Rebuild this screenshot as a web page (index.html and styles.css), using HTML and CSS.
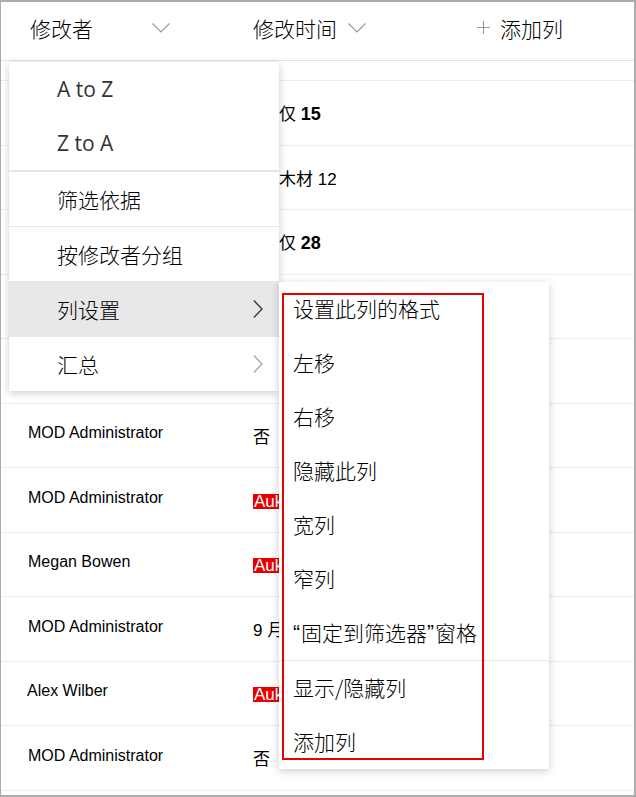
FILE: index.html
```html
<!DOCTYPE html>
<html lang="zh-CN">

<head>
  <meta charset="UTF-8">
  <meta name="viewport" content="width=device-width, initial-scale=1.0">
  <title>修改者 - 列设置</title>
  <link rel="stylesheet" href="styles.css">
</head>

<body>
  <div class="frame">
    <div class="list-header">
      <div class="col col-name">
        <span>修改者</span>
        <svg class="chev-down" width="18" height="10" viewBox="0 0 18 10"><path d="M0.5 0.5 L9 9 L17.5 0.5" /></svg>
      </div>
      <div class="col col-time">
        <span>修改时间</span>
        <svg class="chev-down" width="18" height="10" viewBox="0 0 18 10"><path d="M0.5 0.5 L9 9 L17.5 0.5" /></svg>
      </div>
      <div class="col col-add">
        <svg class="plus" width="13" height="13" viewBox="0 0 13 13"><path d="M6.5 0 V13 M0 6.5 H13" /></svg>
        <span>添加列</span>
      </div>
    </div>

    <div class="row row-short"></div>
    <div class="row">
      <div class="cell name"></div>
      <div class="cell value shifted">仅 <b>15</b></div>
    </div>
    <div class="row">
      <div class="cell name"></div>
      <div class="cell value shifted">木材 12</div>
    </div>
    <div class="row">
      <div class="cell name"></div>
      <div class="cell value shifted">仅 <b>28</b></div>
    </div>
    <div class="row">
      <div class="cell name"></div>
      <div class="cell value"></div>
    </div>
    <div class="row">
      <div class="cell name"></div>
      <div class="cell value"></div>
    </div>
    <div class="row">
      <div class="cell name">MOD Administrator</div>
      <div class="cell value">否</div>
    </div>
    <div class="row">
      <div class="cell name">MOD Administrator</div>
      <div class="cell value"><span class="tag">Auk</span></div>
    </div>
    <div class="row">
      <div class="cell name">Megan Bowen</div>
      <div class="cell value"><span class="tag">Auk</span></div>
    </div>
    <div class="row">
      <div class="cell name">MOD Administrator</div>
      <div class="cell value">9 月</div>
    </div>
    <div class="row">
      <div class="cell name tight">Alex Wilber</div>
      <div class="cell value"><span class="tag">Auk</span></div>
    </div>
    <div class="row">
      <div class="cell name">MOD Administrator</div>
      <div class="cell value">否</div>
    </div>
  </div>

  <!-- column header dropdown -->
  <div class="menu sort-menu">
    <div class="menu-item latin">A to Z</div>
    <div class="menu-item latin">Z to A</div>
    <div class="menu-item group-start">筛选依据</div>
    <div class="menu-item split">按修改者分组</div>
    <div class="menu-item active">
      <span>列设置</span>
      <svg class="chev-right" width="10" height="18" viewBox="0 0 10 18"><path d="M0.8 0.5 L9 9 L0.8 17.5" /></svg>
    </div>
    <div class="menu-item">
      <span>汇总</span>
      <svg class="chev-right faded" width="10" height="18" viewBox="0 0 10 18"><path d="M0.8 0.5 L9 9 L0.8 17.5" /></svg>
    </div>
  </div>

  <!-- column settings submenu -->
  <div class="menu sub-menu">
    <div class="sub-item">设置此列的格式</div>
    <div class="sub-item">左移</div>
    <div class="sub-item">右移</div>
    <div class="sub-item">隐藏此列</div>
    <div class="sub-item">宽列</div>
    <div class="sub-item">窄列</div>
    <div class="sub-item"><span class="quote">“</span>固定到筛选器<span class="quote">”</span>窗格</div>
    <div class="sub-item split-top">显示/隐藏列</div>
    <div class="sub-item">添加列</div>
  </div>

  <div class="highlight-box"></div>
</body>

</html>
```

FILE: styles.css
```css
body {
  margin: 0;
  padding: 0;
  background-color: #fff;
  color: #000;
  font-family: "Noto Sans CJK SC", "Liberation Sans", sans-serif;
}

.frame {
  box-sizing: border-box;
  width: 636px;
  height: 797px;
  border: 2px solid #ababab;
  border-left-width: 1px;
  overflow: hidden;
}

.list-header {
  display: flex;
  align-items: center;
  box-sizing: border-box;
  height: 59px;
  padding-bottom: 7px;
  border-bottom: 1px solid #e3e3e3;
  font-size: 21px;
  font-weight: 300;
}

.col {
  display: flex;
  align-items: center;
}

.col-name {
  width: 252px;
  padding-left: 29px;
  box-sizing: border-box;
}

.col-name .chev-down {
  margin-left: 59px;
}

.col-time {
  width: 217px;
}

.col-time .chev-down {
  margin-left: 11px;
}

.col-add {
  padding-left: 7px;
  gap: 10px;
}

.chev-down path,
.plus path {
  fill: none;
  stroke: #9a9a9a;
  stroke-width: 1.2;
}

.row {
  display: flex;
  align-items: center;
  height: 63.5px;
  border-bottom: 1px solid #ececec;
}

.row-short {
  height: 19px;
}

.cell {
  font-family: "Liberation Sans", "Noto Sans CJK SC", sans-serif;
  font-size: 16px;
}

.cell.name {
  width: 252px;
  padding-left: 27px;
  box-sizing: border-box;
  margin-top: -4px;
}

.cell.name.tight {
  padding-left: 26px;
}

.cell.value {
  font-size: 17px;
}

.cell.shifted {
  padding-left: 26px;
}

.cell.shifted b {
  font-size: 18px;
}

.tag {
  display: inline-block;
  background-color: #e60000;
  color: #fff;
  line-height: 15px;
  padding: 0 1px;
  margin-top: 6px;
}

/* dropdowns */
.menu {
  position: absolute;
  width: 270px;
  background-color: #fff;
  box-shadow: 0 2px 8px rgba(0, 0, 0, 0.2);
  font-size: 21px;
  font-weight: 300;
}

.sort-menu {
  left: 9px;
  top: 62px;
}

.menu-item {
  display: flex;
  align-items: center;
  height: 54px;
  padding: 0 16px 0 48px;
}

.menu-item.latin {
  font-family: "Open Sans", "Noto Sans", sans-serif;
  font-weight: 400;
  color: #333;
}

.menu-item.group-start {
  border-top: 2px solid #e4e4e4;
}

.menu-item.split {
  border-top: 1px solid #e8e8e8;
}

.menu-item.active {
  background-color: #e8e8e8;
  height: 56px;
}

.chev-right {
  margin-left: auto;
}

.chev-right path {
  fill: none;
  stroke: #3c3c3c;
  stroke-width: 1.4;
}

.chev-right.faded path {
  stroke: #a6a6a6;
}

.sub-menu {
  left: 279px;
  top: 282px;
}

.sub-item {
  display: flex;
  align-items: center;
  box-sizing: border-box;
  height: 54px;
  padding: 0 0 3px 14px;
}

.sub-item .quote {
  font-family: "Liberation Sans", sans-serif;
  font-weight: 400;
  margin-right: 1px;
}

.sub-item.split-top {
  border-top: 1px solid #e8e8e8;
  height: 55px;
}

/* annotation drawn over the submenu */
.highlight-box {
  position: absolute;
  left: 282px;
  top: 293px;
  width: 198px;
  height: 463px;
  border: 2px solid #e60000;
}
```
